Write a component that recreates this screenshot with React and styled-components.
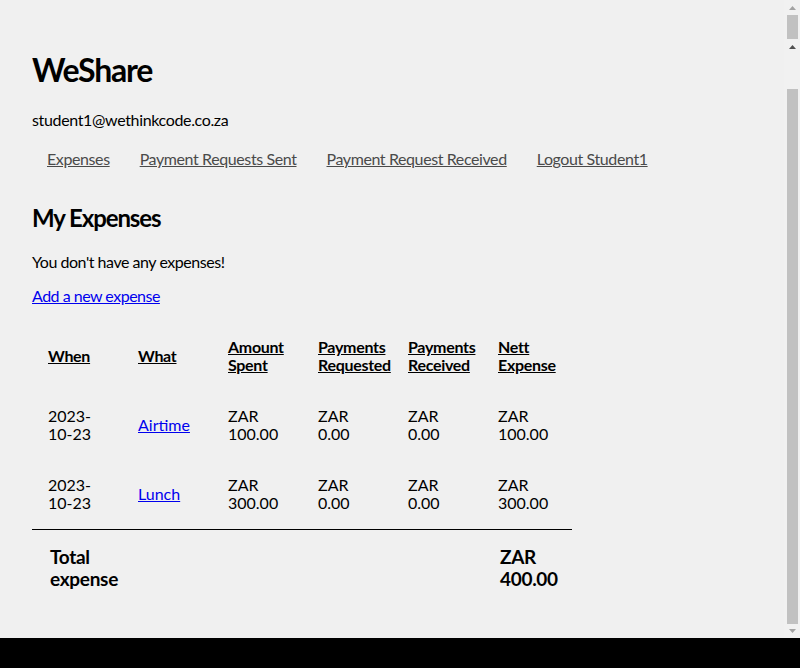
import styled, { createGlobalStyle } from "styled-components";

const GlobalStyle = createGlobalStyle`
  html, body {
    margin: 0;
    padding: 0;
    background: #000;
    overflow: hidden;
  }
  body {
    font-family: "Lato", "Liberation Sans", sans-serif;
    color: #000;
  }
`;

const expenses = [
  { id: 1, when: "2023-10-23", what: "Airtime", spent: "100.00", requested: "0.00", received: "0.00", nett: "100.00" },
  { id: 2, when: "2023-10-23", what: "Lunch", spent: "300.00", requested: "0.00", received: "0.00", nett: "300.00" },
];

const navItems = ["Expenses", "Payment Requests Sent", "Payment Request Received", "Logout Student1"];

const columns = ["When", "What", "Amount Spent", "Payments Requested", "Payments Received", "Nett Expense"];

const Arrow = ({ down, color }) => (
  <svg width="11" height="4" viewBox="0 0 11 4">
    <polygon points={down ? "2,0 9,0 5.5,4" : "5.5,0 9,4 2,4"} fill={color} />
  </svg>
);

const App = () => {
  return (
    <>
      <GlobalStyle />
      <Screen>
        <Main>
          <Title>WeShare</Title>
          <Email>student1@wethinkcode.co.za</Email>
          <Nav>
            {navItems.map((item) => (
              <NavLink href="#" key={item}>
                {item}
              </NavLink>
            ))}
          </Nav>
          <Heading>My Expenses</Heading>
          <Note>You don't have any expenses!</Note>
          <AddLink href="#">Add a new expense</AddLink>
          <Table>
            <thead>
              <tr>
                {columns.map((col) => (
                  <Th key={col}>{col}</Th>
                ))}
              </tr>
            </thead>
            <tbody>
              {expenses.map((item) => (
                <tr key={item.id}>
                  <Td>{item.when}</Td>
                  <Td>
                    <ItemLink href="#">{item.what}</ItemLink>
                  </Td>
                  <Td>ZAR {item.spent}</Td>
                  <Td>ZAR {item.requested}</Td>
                  <Td>ZAR {item.received}</Td>
                  <Td>ZAR {item.nett}</Td>
                </tr>
              ))}
            </tbody>
            <tfoot>
              <tr>
                <TotalCell>Total expense</TotalCell>
                <TotalCell />
                <TotalCell />
                <TotalCell />
                <TotalCell />
                <TotalCell>ZAR 400.00</TotalCell>
              </tr>
            </tfoot>
          </Table>
        </Main>
        <Rail>
          <ArrowBox $top={6}>
            <Arrow color="#a3a3a3" />
          </ArrowBox>
          <Thumb $top={5} $height={24} />
          <ArrowBox $top={6}>
            <Arrow color="#505050" />
          </ArrowBox>
          <Thumb $top={40} $height={535} />
          <ArrowBox $top={5}>
            <Arrow down color="#a3a3a3" />
          </ArrowBox>
        </Rail>
      </Screen>
    </>
  );
};

export default App;

const Screen = styled.div`
  display: flex;
  height: 638px;
  background: #f0f0f0;
  overflow: hidden;
`;

const Main = styled.div`
  flex: 1;
  padding: 0 32px;
  overflow: hidden;
`;

const Title = styled.h1`
  font-size: 32px;
  font-weight: 700;
  letter-spacing: -1.2px;
  margin: 50px 0 20px;
  line-height: 40px;
`;

const Email = styled.div`
  font-size: 16px;
  line-height: 20px;
  letter-spacing: -0.35px;
`;

const Nav = styled.nav`
  display: flex;
  margin-top: 19px;
`;

const NavLink = styled.a`
  padding: 0 15px;
  font-size: 16px;
  line-height: 20px;
  letter-spacing: -0.4px;
  color: #4a4a4a;
  text-decoration: underline;
`;

const Heading = styled.h2`
  font-size: 24px;
  font-weight: 700;
  letter-spacing: -1.1px;
  margin: 34px 0 0;
  line-height: 30px;
`;

const Note = styled.p`
  font-size: 16px;
  line-height: 20px;
  letter-spacing: -0.46px;
  margin: 19px 0 0;
`;

const AddLink = styled.a`
  display: inline-block;
  margin-top: 14px;
  font-size: 16px;
  line-height: 20px;
  letter-spacing: -0.5px;
  color: #00e;
  text-decoration: underline;
`;

const Table = styled.table`
  border-collapse: collapse;
  table-layout: fixed;
  width: 540px;
  margin-top: 16px;
`;

const Th = styled.th`
  width: 90px;
  box-sizing: border-box;
  padding: 16px 4px 17px 16px;
  text-align: left;
  font-size: 16px;
  line-height: 18px;
  font-weight: 700;
  letter-spacing: -0.3px;
  text-decoration: underline;
  vertical-align: middle;
`;

const Td = styled.td`
  padding: 16px 14px 17px 16px;
  font-size: 16px;
  line-height: 18px;
  vertical-align: middle;
`;

const ItemLink = styled.a`
  color: #00e;
  text-decoration: underline;
`;

const TotalCell = styled.td`
  border-top: 1px solid #000;
  padding: 16px 4px 16px 18px;
  font-size: 19px;
  line-height: 22px;
  font-weight: 700;
  letter-spacing: -0.3px;
  vertical-align: middle;
`;

const Rail = styled.div`
  width: 16px;
  flex-shrink: 0;
  display: flex;
  flex-direction: column;
  background: #f1f1f1;
`;

const ArrowBox = styled.div`
  display: flex;
  margin: ${(p) => p.$top}px 0 0 3px;
  height: 4px;
`;

const Thumb = styled.div`
  width: 11px;
  height: ${(p) => p.$height}px;
  margin: ${(p) => p.$top}px 0 0 3px;
  background: #c1c1c1;
`;
